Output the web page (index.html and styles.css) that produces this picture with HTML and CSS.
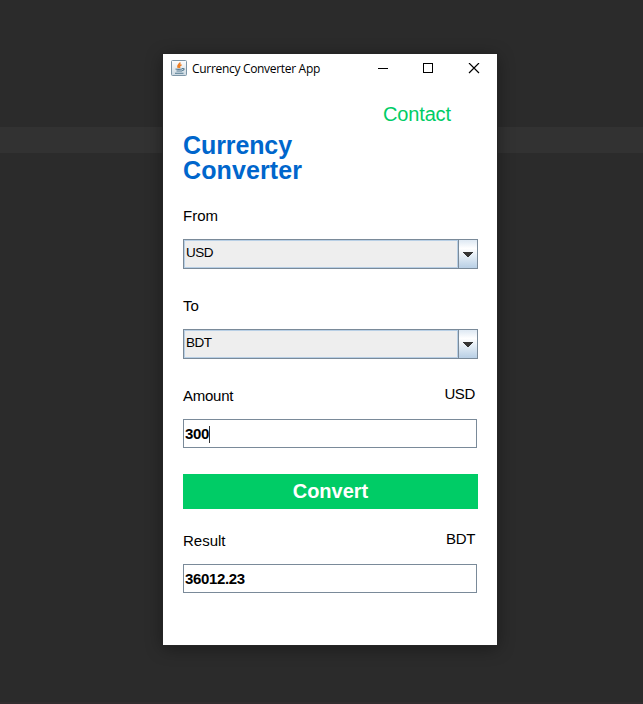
FILE: index.html
```html
<!DOCTYPE html>
<html lang="en">
<head>
<meta charset="utf-8">
<title>Currency Converter App</title>
<link rel="stylesheet" href="styles.css">
</head>
<body>
<main class="window">
  <header class="titlebar">
    <svg class="java" width="16" height="16" viewBox="0 0 16 16">
      <defs><linearGradient id="tile" x2="0" y2="1"><stop offset="0" stop-color="#fff"/><stop offset="1" stop-color="#cbd8e1"/></linearGradient></defs>
      <rect x=".5" y=".5" width="15" height="15" rx="1" fill="url(#tile)" stroke="#7c95a6"/>
      <path d="M9 2.500C9 4.500 5.500 5 7.500 8M10.500 4.700C8 5.800 8.200 6.500 8.800 8" fill="none" stroke="#ed7d22" stroke-width="1.6"/>
      <path d="M4.500 9q3 .8 6.500 0M5.500 11h5.500M11 8.500q3-.3 1.700 1.300l-1.500 1M4 13.200h8.500" fill="none" stroke="#52788f" stroke-width="1.100"/>
    </svg>
    <span class="caption">Currency Converter App</span>
    <svg class="controls" width="104" height="12" viewBox="0 0 104 12" fill="none" stroke="#000">
      <path d="M0 5.500h10M45.500 .5h9v9h-9z" shape-rendering="crispEdges"/>
      <path d="M91 0l10 10M101 0l-10 10" stroke-width="1.2"/>
    </svg>
  </header>
  <section class="content">
    <a class="contact">Contact</a>
    <h1><span>Currency</span><span>Converter</span></h1>
    <div class="row first"><span class="from">From</span></div>
    <div class="combo"><span class="value usd">USD</span><span class="drop"><svg width="10" height="5" viewBox="0 0 10 5" shape-rendering="crispEdges"><path d="M0 0h10v1H9v1H8v1H7v1H6v1H4V4H3V3H2V2H1V1H0z" fill="#333"/></svg></span></div>
    <div class="row"><span class="to">To</span></div>
    <div class="combo"><span class="value bdt">BDT</span><span class="drop"><svg width="10" height="5" viewBox="0 0 10 5" shape-rendering="crispEdges"><path d="M0 0h10v1H9v1H8v1H7v1H6v1H4V4H3V3H2V2H1V1H0z" fill="#333"/></svg></span></div>
    <div class="row"><span class="amount">Amount</span><span class="unit">USD</span></div>
    <div class="field"><span class="short">300</span><i class="caret"></i></div>
    <div class="convert"><span>Convert</span></div>
    <div class="row result"><span>Result</span><span class="unit">BDT</span></div>
    <div class="field"><span class="long">36012.23</span></div>
  </section>
</main>
</body>
</html>
```
FILE: styles.css
```css
* { box-sizing: border-box; }
body {
  margin: 0;
  height: 704px;
  padding: 54px 0 0 163px;
  overflow: hidden;
  background: linear-gradient(#2b2b2b 127px, #323232 127px, #323232 153px, #2b2b2b 153px, #2b2b2b 702px, #312d2f 702px);
  font-family: "Liberation Sans", Arial, sans-serif;
  color: #000;
}
.window {
  width: 334px;
  height: 591px;
  background: #fff;
  box-shadow: 0 0 0 1px #252525, 0 3px 16px rgba(0, 0, 0, .4);
}
.titlebar { display: flex; height: 30px; padding: 6px 15px 0 8px; }
.java { flex: none; }
.caption {
  flex: 1;
  margin-left: 5px;
  font: 12px/18px "Open Sans", "Noto Sans", sans-serif;
  letter-spacing: -.31px;
  white-space: nowrap;
}
.controls { flex: none; margin-top: 3px; }
.content { display: flex; flex-direction: column; padding: 0 19px 0 20px; }
.contact {
  height: 49px;
  padding: 18px 0 0 200px;
  font-size: 20px;
  line-height: 24px;
  letter-spacing: -.15px;
  color: #00cc66;
}
h1 {
  height: 50px;
  margin: 0;
  font-size: 25px;
  line-height: 25px;
  color: #0066cc;
}
h1 span { display: block; }
h1 span:first-child { letter-spacing: -.1px; }
h1 span:last-child { letter-spacing: .1px; }
.row {
  display: flex;
  justify-content: space-between;
  padding-right: 3px;
  font-size: 15px;
  line-height: 18px;
}
.first { height: 56px; padding-top: 24px; }
.combo + .row { height: 60px; padding-top: 28px; }
.row .unit { margin-top: -2px; letter-spacing: -.35px; }
.amount { letter-spacing: -.25px; }
.combo {
  display: flex;
  height: 30px;
  background: #eee;
  border: 1px solid #7a8a99;
}
.value {
  flex: 1;
  padding: 4px 0 0 1px;
  border: 1px solid #b8cfe5;
  font-size: 13.5px;
  line-height: 16px;
  letter-spacing: -.5px;
}
.drop {
  display: flex;
  align-items: center;
  justify-content: center;
  width: 20px;
  padding-right: 1px;
  margin-right: -1px;
  border: 1px solid #7a8a99;
  border-width: 0 1px 0 1px;
  background: linear-gradient(#dde8f3, #fff 30%, #b8cfe5);
}
.field {
  display: flex;
  width: 294px;
  height: 29px;
  padding: 5px 0 0 1px;
  border: 1px solid #7a8a99;
  font-size: 15px;
  font-weight: bold;
  line-height: 18px;
  letter-spacing: -.35px;
}
.caret { width: 1px; height: 17px; margin-top: 1px; background: #333; }
.convert {
  height: 35px;
  margin-top: 26px;
  background: #00cc66;
  color: #fff;
  font-size: 20px;
  font-weight: bold;
  line-height: 34px;
  text-align: center;
}
.result { height: 55px; padding-top: 23px; }
```
